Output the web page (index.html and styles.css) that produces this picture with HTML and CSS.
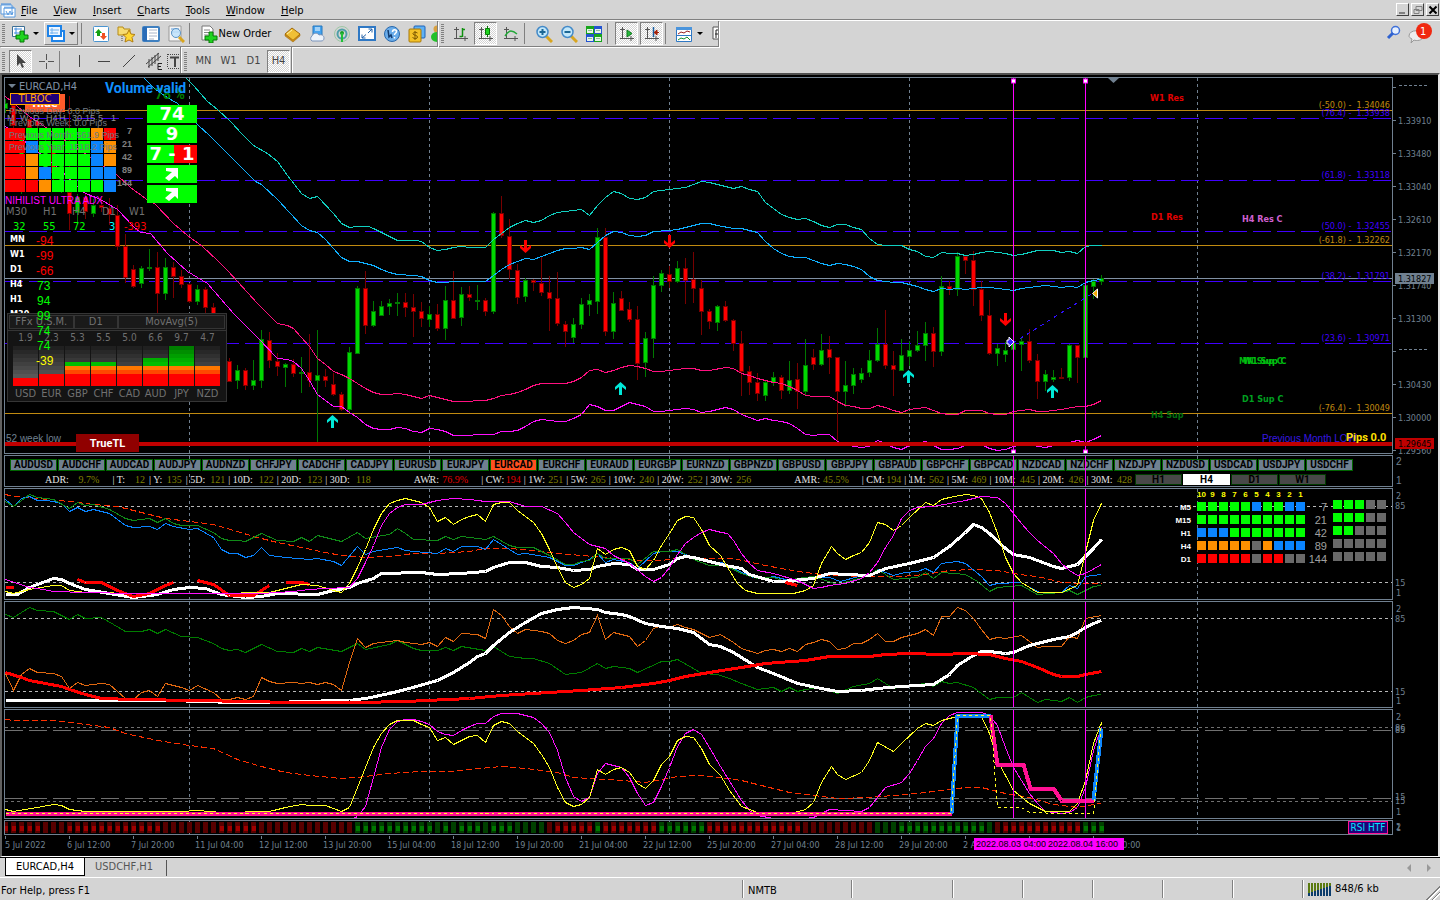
FILE: index.html
```html
<!DOCTYPE html>
<html lang="en">
<head>
    <meta charset="utf-8">
    <meta name="viewport" content="width=device-width, initial-scale=1.0">
    <title>EURCAD,H4</title>
    <link rel="stylesheet" href="styles.css">
</head>
<body>
    <header class="menubar">
        <svg class="app-icon" width="16" height="16" viewBox="0 0 16 16"><path d="M1 3h11v9H1zM4 6h11v9H4z" fill="#fff" stroke="#5a9be0"/><path d="M1.500 2h10M4.500 5.500h10" stroke="#3f8be0" stroke-width="2" stroke-dasharray="1 1"/><path d="M6 9l2 4 2-4 2 4 1-3" fill="none" stroke="#5a9be0"/></svg>
        <nav>
            <a href="#"><u>F</u>ile</a>
            <a href="#"><u>V</u>iew</a>
            <a href="#"><u>I</u>nsert</a>
            <a href="#"><u>C</u>harts</a>
            <a href="#"><u>T</u>ools</a>
            <a href="#"><u>W</u>indow</a>
            <a href="#"><u>H</u>elp</a>
        </nav>
        <div class="window-buttons">
            <button aria-label="Minimize"><svg width="10" height="10"><path d="M1 8h6" stroke="#808080" stroke-width="2"/></svg></button>
            <button aria-label="Restore"><svg width="10" height="10"><path d="M3 1.500h6v4H3zM1 4.500h5v4H1z" fill="#d4d4d4" stroke="#808080"/></svg></button>
            <button aria-label="Close"><svg width="10" height="10"><path d="M1.500 1.500l7 7M8.500 1.500l-7 7" stroke="#000" stroke-width="2"/></svg></button>
        </div>
    </header>

    <div class="toolbars">
        <div class="toolbar-row">
            <div class="toolbar standard">
                <i class="grip"></i>
                <button class="tool drop" aria-label="New chart">
                    <svg width="18" height="18"><path d="M1.500 1.500h12v10h-12z" fill="#fff" stroke="#3d6f94"/><path d="M3 4h8M5 2.500v7M3 8h6" stroke="#3f8be0"/><path d="M9 6h4v4h4v4h-4v3H9v-3H5v-4h4z" fill="#1fd41f" stroke="#087808"/></svg><i class="caret"></i>
                </button>
                <button class="tool drop raised" aria-label="Profiles">
                    <svg width="18" height="18"><path d="M5 6h12v10H5z" fill="#fff" stroke="#1e83e8" stroke-width="2"/><path d="M1 1h13v10H1z" fill="#eef6ff" stroke="#1e83e8" stroke-width="2"/><path d="M3 5h9M5 3v6M3 8h8" stroke="#6fb0ee"/></svg><i class="caret"></i>
                </button>
                <i class="sep"></i>
                <button class="tool" aria-label="Market watch"><svg width="18" height="18"><rect x="1.500" y="1.500" width="15" height="15" rx="1" fill="#fff" stroke="#4a94d0"/><path d="M6.500 4l3.500 4H8v3H5V8H3z" fill="#12a012"/><path d="M11.500 15L8 11h2V8h3v3h2z" fill="#f05020"/></svg></button>
                <button class="tool" aria-label="Navigator"><svg width="18" height="18"><path d="M1 2h5l1 2h6v6H1z" fill="#f7dc72" stroke="#b58a17"/><path d="M5 11v6" stroke="#444" stroke-dasharray="1 1"/><path d="M12 5l2 4 4 .5-3 3 1 4.500-4-2-4 2 1-4.500-3-3 4-.5z" fill="#ffd733" stroke="#b17d10"/></svg></button>
                <button class="tool" aria-label="Data window"><svg width="18" height="18"><rect x="1" y="2" width="16" height="14" rx="1" fill="#fff" stroke="#3f80c0" stroke-width="2"/><path d="M1 2h4v14H1z" fill="#2a6cb8"/><path d="M7 5h8M7 8h8M7 11h8M7 14h5" stroke="#a8b4c8"/></svg></button>
                <button class="tool" aria-label="Strategy tester"><svg width="18" height="18"><path d="M2 1h12v15H2z" fill="#f4f4f4" stroke="#999"/><path d="M4 4h8M4 7h8" stroke="#5a9be0"/><circle cx="9" cy="8" r="4.500" fill="#bfe2fa" fill-opacity=".85" stroke="#5c94c4"/><path d="M12 12l5 5" stroke="#d8a520" stroke-width="3"/></svg></button>
                <i class="sep"></i>
                <button class="tool order">
                    <svg width="18" height="18"><path d="M2 1h8l3 3v11H2z" fill="#fff" stroke="#777"/><path d="M4 5h6M4 7.500h6M4 10h4" stroke="#888"/><path d="M9 7h4v4h4v4h-4v3H9v-3H5v-4h4z" fill="#1fd41f" stroke="#087808"/></svg>New Order
                </button>
                <button class="tool" aria-label="MetaEditor"><svg width="18" height="18"><path d="M2 9l7-6 8 6-7 7z" fill="#f0bf35" stroke="#a0690b"/><path d="M2 9v2l8 6 7-6V9l-7 6z" fill="#c98b17" stroke="#a0690b" stroke-width=".5"/><path d="M4 9l5-4" stroke="#fff2a8"/></svg></button>
                <button class="tool" aria-label="Virtual hosting"><svg width="18" height="18"><path d="M5 1h9v9H5z" fill="#45a3ef" stroke="#2476bd"/><path d="M7 3h5M7 5h5" stroke="#fff"/><path d="M4 16a3 3 0 0 1 0-5c1-3 5-4 7-1 3-1 5 1 5 3s-1 3-3 3z" fill="#eef3fa" stroke="#7d96bd"/></svg></button>
                <button class="tool" aria-label="Signals"><svg width="18" height="18"><circle cx="9" cy="9" r="7.500" fill="none" stroke="#9cc6a4"/><circle cx="9" cy="9" r="4.500" fill="none" stroke="#4f9fa8" stroke-width="2"/><circle cx="9" cy="8" r="2" fill="#159c25"/><path d="M9 8v9" stroke="#20c038" stroke-width="2"/></svg></button>
                <button class="tool" aria-label="Full screen"><svg width="18" height="18"><rect x="1" y="2" width="16" height="13" fill="#fff" stroke="#2f78c4" stroke-width="2"/><path d="M10 8l4-4M10.500 4H14v3.500M8 9.500L4 13M4 9.500V13h3.500" fill="none" stroke="#2463a8"/></svg></button>
                <button class="tool" aria-label="Help"><svg width="18" height="18"><circle cx="9" cy="9" r="7.500" fill="#6badea" stroke="#2868ac"/><path d="M5 5l1 7 2-2 1 3" fill="none" stroke="#123c70" stroke-width="1.500"/><path d="M9.500 7c0-3 4-3 4-.5 0 2-2 1.500-2 3.500M11.500 12v1.500" fill="none" stroke="#fff" stroke-width="1.500"/></svg></button>
                <button class="tool" aria-label="Payments"><svg width="18" height="18"><rect x="6" y="1" width="11" height="12" rx="1" fill="#5fb0f4" stroke="#1c62b8"/><rect x="1" y="4" width="12" height="13" rx="1" fill="#f3c228" stroke="#a8790a"/><path d="M9.500 8c-2-1.500-5-.5-4.500 1s4.500 1 4.500 3-3 2-5 .5M7 6v9" fill="none" stroke="#7c5800"/></svg></button>
                <button class="tool cut" aria-label="Community"><svg width="8" height="18"><circle cx="8" cy="4" r="3.500" fill="#d8a040"/><ellipse cx="8" cy="12" rx="6" ry="5" fill="#22c02a"/></svg></button>
            </div>
            <div class="toolbar charts">
                <i class="grip"></i>
                <button class="tool" aria-label="Bar chart"><svg width="16" height="16"><path d="M3.500 1v12M1 3.500h5M1 12.500h14M12 10v5" stroke="#555"/><path d="M9.500 2v9M9 3.500h3M6.500 10.500H9" stroke="#109010" stroke-width="1.500" fill="none"/></svg></button>
                <button class="tool pressed" aria-label="Candlesticks"><svg width="16" height="16"><path d="M3.500 1v12M1 3.500h5M1 12.500h14M12 10v5" stroke="#555"/><path d="M9.500 0v11" stroke="#087808"/><path d="M7.500 2.500h4v6h-4z" fill="#1fd41f" stroke="#087808"/></svg></button>
                <button class="tool" aria-label="Line chart"><svg width="16" height="16"><path d="M3.500 1v12M1 3.500h5M1 12.500h14M12 10v5" stroke="#555"/><path d="M2 10c3-5 6-7 12-2" fill="none" stroke="#22a838" stroke-width="1.500"/></svg></button>
                <i class="sep"></i>
                <button class="tool" aria-label="Zoom in"><svg width="18" height="18"><path d="M11 11l6 6" stroke="#d8a520" stroke-width="3"/><circle cx="7.500" cy="7" r="5.500" fill="#c2e7fa" stroke="#438ac8" stroke-width="1.500"/><path d="M7.500 4v6M4.500 7h6" stroke="#1b6795" stroke-width="2"/></svg></button>
                <button class="tool" aria-label="Zoom out"><svg width="18" height="18"><path d="M11 11l6 6" stroke="#d8a520" stroke-width="3"/><circle cx="7.500" cy="7" r="5.500" fill="#c2e7fa" stroke="#438ac8" stroke-width="1.500"/><path d="M4.500 7h6" stroke="#1b6795" stroke-width="2"/></svg></button>
                <button class="tool" aria-label="Tile windows"><svg width="18" height="18"><path d="M1 1h8v8H1zM9 9h8v8H9z" fill="#18a51c"/><path d="M9 1h8v8H9zM1 9h8v8H1z" fill="#2454d0"/><path d="M2 4h6v4H2zM10 4h6v4h-6zM2 12h6v4H2zM10 12h6v4h-6z" fill="#e8f4ea"/><path d="M3 5.500h4M11 5.500h4M3 13.500h4M11 13.500h4" stroke="#8dbd9a"/></svg></button>
                <i class="sep"></i>
                <button class="tool pressed" aria-label="Auto scroll"><svg width="16" height="16"><path d="M3.500 1v12M1 3.500h5M1 12.500h14M12 10v5" stroke="#555"/><path d="M8 4l5 3.500L8 11z" fill="#26b93a" stroke="#0d7a1c"/></svg></button>
                <button class="tool pressed" aria-label="Chart shift"><svg width="16" height="16"><path d="M3.500 1v12M1 3.500h5M1 12.500h14M12 10v5" stroke="#555"/><path d="M9.500 1v10" stroke="#1a5fa0" stroke-width="1.500"/><path d="M15 6.500h-4M13 4l-3 2.500L13 9z" fill="#c02808" stroke="#a02008"/></svg></button>
                <i class="sep"></i>
                <button class="tool drop" aria-label="Templates"><svg width="18" height="18"><path d="M1.500 2.500h15v14h-15z" fill="#fff" stroke="#2f78c4"/><path d="M1 2h16v3H1z" fill="#4a94dc"/><path d="M1 10.500h16" stroke="#2f78c4"/><path d="M3 9l3-2 3 1 3-2 3 1" fill="none" stroke="#982020"/><path d="M3 15l3-2 3 1 3-2 3 3" fill="none" stroke="#109030"/></svg><i class="caret"></i></button>
                <button class="tool cut" aria-label="Indicators"><svg width="8" height="18"><path d="M8 2H3v12h5" fill="#fff" stroke="#555"/><path d="M8 5H6v8M5 9h3" stroke="#222" fill="none"/></svg></button>
            </div>
            <div class="toolbar-side">
                <button class="tool" aria-label="Search"><svg width="16" height="16"><circle cx="9.500" cy="5.500" r="4" fill="#e6f0ff" stroke="#3f70d8" stroke-width="1.500"/><path d="M7 8l-5 5" stroke="#2f62d0" stroke-width="3"/></svg></button>
                <button class="tool messages" aria-label="Messages"><svg width="26" height="24"><path d="M2 15c0-7 14-7 14 0 0 5-7 5-9 4l-3 3 1-4c-2-1-3-2-3-3z" fill="#eee" stroke="#999"/><circle cx="17" cy="10" r="8" fill="#f02810"/></svg><span>1</span></button>
            </div>
        </div>
        <div class="toolbar-row second">
            <div class="toolbar drawing">
                <i class="grip"></i>
                <button class="tool pressed" aria-label="Cursor"><svg width="16" height="16"><path d="M4 1v12l3-3 2 5 2-1-2-4h4z" fill="#444"/></svg></button>
                <button class="tool" aria-label="Crosshair"><svg width="16" height="16"><path d="M8.500 1v6M8.500 10v6M1 8.500h6M10 8.500h6" stroke="#555"/></svg></button>
                <i class="sep"></i>
                <button class="tool" aria-label="Vertical line"><svg width="16" height="16"><path d="M8.500 2v12" stroke="#444"/></svg></button>
                <button class="tool" aria-label="Horizontal line"><svg width="16" height="16"><path d="M2 8.500h12" stroke="#444"/></svg></button>
                <button class="tool" aria-label="Trendline"><svg width="16" height="16"><path d="M2 14L14 2" stroke="#444"/></svg></button>
                <button class="tool" aria-label="Equidistant channel"><svg width="18" height="18"><path d="M1 12L14 1M3 15l13-11M4 7v9M7 5v9M10 3v9M13 1v8" stroke="#444"/><path d="M17 11.500h-4v6h4M13 14.500h3" fill="none" stroke="#222"/></svg></button>
                <button class="tool text-tool" aria-label="Text label"><svg width="12" height="16"><path d="M.5 1v14M1 1.500h11M1 15.500h11" stroke="#444" stroke-dasharray="1 1"/><path d="M3 4.500h9M8 5v9" stroke="#444" stroke-width="2"/></svg></button>
            </div>
            <div class="toolbar periods">
                <i class="grip"></i>
                <button class="tool">MN</button>
                <button class="tool">W1</button>
                <button class="tool">D1</button>
                <button class="tool pressed">H4</button>
            </div>
        </div>
    </div>

    <main class="chart">
        <section class="pane price">
            <div class="plot">
                <svg class="layer" id="price"></svg>
                <svg class="layer" id="notes"></svg>
                <button class="hide-button">Hide</button>
                <button class="tlboc">TLBOC</button>
                <div class="signal-grid" id="signals"></div>
                <div class="scores">
                    <div>74</div>
                    <div>9</div>
                    <div class="split">7 - 1</div>
                    <div><svg width="16" height="14"><path d="M2 1h12v11l-3-3-6 5-4-3 7-6-6-1z" fill="#fff"/></svg></div>
                    <div><svg width="16" height="14"><path d="M2 1h12v11l-3-3-6 5-4-3 7-6-6-1z" fill="#fff"/></svg></div>
                </div>
                <div class="strength">
                    <div class="strength-head"><span>FFx U.S.M.</span><span>D1</span><span>MovAvg(5)</span></div>
                    <div class="strength-bars" id="strength"></div>
                </div>
                <svg class="layer" id="values"></svg>
                <button class="truetl">TrueTL</button>
            </div>
            <svg class="scale" id="price-scale"></svg>
        </section>
        <section class="pane symbols">
            <div class="plot">
                <svg class="layer" id="symbol-grid"></svg>
                <div class="symbol-row" id="symbol-row"></div>
                <div class="range-row">
                    <div class="ranges" id="ranges"></div>
                    <div class="tf-buttons"><button>H1</button><button class="active">H4</button><button>D1</button><button>W1</button></div>
                </div>
                <svg class="layer" id="symbol-cursor"></svg>
            </div>
            <svg class="scale" id="symbol-scale"></svg>
        </section>
        <section class="pane osc">
            <div class="plot">
                <svg class="layer" id="osc"></svg>
                <div class="matrix" id="matrix"></div>
            </div>
            <svg class="scale" id="osc-scale"></svg>
        </section>
        <section class="pane trend">
            <div class="plot"><svg class="layer" id="trend"></svg></div>
            <svg class="scale" id="trend-scale"></svg>
        </section>
        <section class="pane rsi">
            <div class="plot"><svg class="layer" id="rsi"></svg></div>
            <svg class="scale" id="rsi-scale"></svg>
        </section>
        <section class="pane strip">
            <div class="plot"><svg class="layer" id="strip"></svg><button class="rsi-button">RSI HTF</button></div>
            <svg class="scale" id="strip-scale"></svg>
        </section>
        <svg class="dates" id="dates"></svg>
    </main>

    <nav class="tabs">
        <a class="active" href="#">EURCAD,H4</a>
        <a href="#">USDCHF,H1</a>
        <div class="tab-arrows"><i class="left"></i><i class="right"></i></div>
    </nav>

    <footer class="status">
        <span class="help">For Help, press F1</span>
        <span class="profile">NMTB</span>
        <span class="wide"></span>
        <span></span>
        <span></span>
        <span></span>
        <span></span>
        <span></span>
        <span class="traffic"><svg width="23" height="13" id="traffic"></svg>848/6 kb</span>
    </footer>

    <script src="script.js"></script>
</body>
</html>
```
FILE: styles.css
```css
:root {
    --face: #d4d4d4;
    --slate: #708090;
    --lime: #00ff00;
    --blue: #0a84ff;
    --ui: "DejaVu Sans Condensed", "DejaVu Sans", sans-serif;
    --chart: "Liberation Sans", sans-serif;
}

* {
    box-sizing: border-box;
}

body {
    margin: 0;
    min-height: 100vh;
    display: flex;
    flex-direction: column;
    background: var(--face);
    color: #000;
    font: 11px/14px var(--ui);
}

a {
    color: inherit;
    text-decoration: none;
}

button {
    font: inherit;
    color: inherit;
    margin: 0;
    padding: 0;
    border: 0;
    background: none;
}

svg {
    display: block;
    flex: none;
}

/* menu */
.menubar {
    display: flex;
    align-items: center;
    height: 20px;
    border-bottom: 1px solid #808080;
}

.menubar nav {
    display: flex;
    flex: 1;
    gap: 16px;
    padding: 3px 0 0 5px;
}

.window-buttons {
    display: flex;
    gap: 2px;
    padding-right: 1px;
}

.window-buttons button {
    width: 13px;
    height: 13px;
    padding: 1px;
    border: 1px solid;
    border-color: #fff #404040 #404040 #fff;
}

/* toolbars */
.toolbars {
    border-top: 1px solid #fff;
}

.toolbar-row {
    display: flex;
    height: 26px;
}

.toolbar {
    display: flex;
    align-items: center;
    padding-left: 2px;
    border-right: 1px solid #808080;
    border-bottom: 1px solid #808080;
    box-shadow: 1px 1px #fff;
    margin-right: 1px;
    overflow: hidden;
}

.second .toolbar {
    padding-top: 2px;
    border-bottom: 0;
}

.grip {
    width: 3px;
    height: 19px;
    margin-right: 3px;
    background: repeating-linear-gradient(#808080 0 1px, var(--face) 1px 2px);
}

.charts .grip,
.periods .grip {
    margin-right: 4px;
}

.sep {
    width: 1px;
    height: 21px;
    margin: 0 6px 0 1px;
    background: #808080;
}

.tool {
    display: flex;
    flex: none;
    align-items: center;
    justify-content: center;
    width: 25px;
    height: 23px;
}

.tool.drop {
    width: 34px;
    gap: 4px;
}

.standard .drop {
    margin-right: 2px;
}

.charts .drop {
    margin-right: 4px;
}

.caret {
    border: 3px solid transparent;
    border-top-color: #000;
    border-bottom: 0;
}

.tool.raised {
    border: 1px solid;
    border-color: #fff #808080 #808080 #fff;
}

.tool.pressed {
    width: 23px;
    margin: 0 1px;
    border: 1px solid;
    border-color: #808080 #fff #fff #808080;
    background: repeating-conic-gradient(#fff 0 25%, var(--face) 0 50%) 0 0 / 2px 2px;
}

.tool.order {
    width: 83px;
    gap: 1px;
    padding-right: 4px;
}

.tool.cut {
    width: 8px;
}

.toolbar-side {
    display: flex;
    gap: 1px;
    margin-left: auto;
    padding-right: 8px;
}

.messages {
    position: relative;
}

.messages span {
    position: absolute;
    top: 4px;
    left: 13px;
    color: #fff;
}

.tool.text-tool {
    width: 14px;
}

.periods {
    color: #444;
}

/* chart window */
.chart {
    display: flex;
    flex: 1;
    flex-direction: column;
    gap: 1px;
    padding: 2px 0 0 2px;
    background: #000;
    border: solid;
    border-width: 2px 2px 1px;
    border-color: #505050 #e4e4e4 #fff #606060;
    font-family: var(--chart);
    font-size: 10px;
}

.pane {
    display: flex;
}

.plot {
    position: relative;
    flex: 1;
    min-width: 0;
    border: 1px solid var(--slate);
    overflow: hidden;
}

.layer {
    position: absolute;
    inset: 0;
    width: 100%;
    height: 100%;
    pointer-events: none;
}

.scale {
    width: 45px;
    height: 100%;
}

.price {
    height: 377px;
}

.symbols {
    height: 32px;
}

.osc {
    height: 112px;
}

.trend {
    height: 107px;
}

.rsi {
    height: 110px;
}

.strip {
    height: 15px;
}

.dates {
    width: 100%;
    height: 19px;
}

.crisp {
    fill: none;
    shape-rendering: crispEdges;
}

text {
    fill: var(--slate);
    font: 10px var(--chart);
}

text.axis,
text.fib {
    font: 9px var(--ui);
}

text.small {
    font-size: 9px;
}

text.bold {
    font-size: 9px;
    font-weight: bold;
}

text.level {
    font: bold 9px "DejaVu Sans Condensed", sans-serif;
}

text.title {
    font: 11px var(--ui);
}

text.num {
    font-size: 12px;
}

text.head {
    font: bold 14px Roboto, sans-serif;
}

text.pips {
    font: bold 11px Roboto, sans-serif;
}

/* objects lying over the price plot */
.hide-button {
    position: absolute;
    top: 16px;
    left: 20px;
    width: 40px;
    height: 18px;
    background: #ff5a2a;
    color: #fff;
    font: bold 11px/20px var(--ui);
}

.tlboc {
    position: absolute;
    top: 15px;
    left: 5px;
    width: 50px;
    height: 12px;
    border: 1px solid #ffa500;
    background: #200078;
    color: #ffa500;
    font: 11px/10px var(--ui);
}

.signal-grid {
    position: absolute;
    top: 50px;
    left: 0;
    display: grid;
    grid-template-columns: 20px repeat(7, 12px);
    grid-auto-rows: 12px;
    gap: 1px;
}

.scores {
    position: absolute;
    top: 27px;
    left: 142px;
    width: 50px;
    display: grid;
    gap: 2px;
    color: #fff;
    font: bold 18px/18px "DejaVu Sans", sans-serif;
    text-align: center;
}

.scores div {
    display: flex;
    align-items: center;
    justify-content: center;
    height: 18px;
    background: var(--lime);
}

.scores .split {
    background: linear-gradient(90deg, var(--lime) 54%, #ff0000 54%);
}

.strength {
    position: absolute;
    top: 235px;
    left: 2px;
    width: 220px;
    height: 89px;
    border: 1px solid #353535;
    background: #141414;
    color: #707070;
    font: 10px/12px var(--ui);
}

.strength-head {
    display: flex;
    padding: 1px;
    border-bottom: 1px solid #353535;
    font-size: 11px;
    text-align: center;
}

.strength-head span {
    flex: 44;
    border: 1px solid #353535;
    background: #1a1a1a;
}

.strength-head span:first-child {
    flex: 65;
}

.strength-head span:last-child {
    flex: 109;
}

.strength-bars {
    display: grid;
    grid-template-columns: repeat(8, 25px);
    gap: 1px;
    padding: 1px 5px;
    text-align: center;
}

.strength-bars .bar {
    display: flex;
    flex-direction: column-reverse;
    height: 40px;
    margin: 2px 0;
    background: linear-gradient(#202020 0 10%, #282828 10% 20%, #303030 20% 30%, #383838 30% 40%, #404040 40% 50%, #484848 50% 60%, #505050 60% 70%, #585858 70% 80%, #606060 80%);
}

.strength-bars span {
    font-size: 11px;
}

.bar i {
    height: 4px;
}

.truetl {
    position: absolute;
    top: 356px;
    left: 71px;
    width: 63px;
    height: 18px;
    background: #900000;
    color: #fff;
    font: bold 11px/20px Roboto, sans-serif;
}

/* symbol buttons and ranges */
.symbol-row {
    position: relative;
    display: flex;
    gap: 1px;
    padding: 3px 0 0 5px;
}

.symbol-row button {
    width: 47px;
    height: 12px;
    border: 1px solid #006400;
    background: var(--slate);
    color: #000;
    font: bold 10px/10px Roboto, sans-serif;
}

.symbol-row .active {
    background: #ff5020;
}

.range-row {
    position: relative;
    display: flex;
    padding-top: 3px;
}

.ranges {
    display: flex;
    width: 1130px;
    padding-left: 40px;
    color: #e0e0e0;
    font: 10px/12px "Liberation Serif", serif;
}

.ranges span {
    display: flex;
    width: 43px;
    justify-content: space-between;
    padding-right: 3px;
    white-space: nowrap;
}

.ranges .name {
    width: 68px;
    padding-right: 13px;
}

.ranges .short {
    width: 37px;
    padding-right: 4px;
}

.ranges .long {
    width: 49px;
    padding-right: 3px;
}

.ranges .end {
    width: 89px;
    padding-right: 43px;
}

.ranges b {
    color: #808000;
    font-weight: normal;
}

.ranges .hot b {
    color: #e00000;
}

.tf-buttons {
    display: flex;
    gap: 1px;
}

.tf-buttons button {
    width: 47px;
    height: 11px;
    border: 1px solid #003c00;
    background: #484848;
    color: #000;
    font: bold 10px/9px Roboto, sans-serif;
}

.tf-buttons .active {
    background: #fff;
    border-color: #fff;
}

/* timeframe matrix */
.matrix {
    position: absolute;
    top: 0;
    right: 6px;
    display: grid;
    grid-template-columns: 26px repeat(10, 9px) 24px repeat(5, 9px);
    grid-template-rows: 11px repeat(5, 11px);
    gap: 2px;
    color: #ffff00;
    font: bold 8px/11px "Liberation Sans", sans-serif;
    text-align: center;
}

.matrix i {
    height: 9px;
}

.matrix .late {
    margin-top: -2px;
}

.matrix .label {
    color: #fff;
    text-align: right;
    padding-right: 4px;
}

.matrix .period {
    color: #a0a0a0;
    font-size: 11px;
    font-weight: normal;
    text-align: right;
    padding-right: 4px;
}

.g { background: var(--lime); }
.r { background: #ff0000; }
.o { background: #ff9000; }
.b { background: var(--blue); }
.x { background: #696969; }

.rsi-button {
    position: absolute;
    right: 4px;
    top: 0;
    width: 40px;
    height: 13px;
    border: 1px solid #ff1493;
    background: #200078;
    color: #00e5ff;
    font: 10px/11px var(--ui);
}

/* chart tabs */
.tabs {
    display: flex;
    height: 21px;
    padding-left: 5px;
    border-top: 1px solid #000;
    border-bottom: 1px solid #fff;
    color: #555;
}

.tabs a {
    padding: 2px 10px 0;
    height: 18px;
}

.tabs a + a {
    height: 16px;
    margin-top: 2px;
    padding-top: 0;
    padding-right: 13px;
    border-right: 1px solid #555;
}

.tabs .active {
    border: 1px solid #000;
    border-top: 0;
    background: #fff;
    color: #000;
}

.tab-arrows {
    display: flex;
    gap: 16px;
    align-items: center;
    margin-left: auto;
    padding-right: 9px;
}

.tab-arrows i {
    border: 4px solid transparent;
}

.tab-arrows .left {
    border-left: 0;
    border-right-color: #999;
}

.tab-arrows .right {
    border-right: 0;
    border-left-color: #999;
}

/* status bar */
.status {
    display: flex;
    height: 22px;
    padding: 2px 0;
    line-height: 22px;
    background:
        linear-gradient(135deg, transparent 50%, #808080 50% 56%, #fff 56% 62%, transparent 62% 68%, #808080 68% 74%, #fff 74% 80%, transparent 80%) right bottom / 14px 14px no-repeat;
}

.status span {
    width: 70px;
    height: 18px;
    padding-left: 5px;
    border-left: 1px solid #808080;
    box-shadow: inset 1px 0 #fff;
}

.status .help {
    flex: 1;
    padding-left: 1px;
    border: 0;
    box-shadow: none;
}

.status .profile {
    width: 109px;
}

.status .wide {
    width: 101px;
}

.status .traffic {
    display: flex;
    align-items: center;
    gap: 4px;
    width: 138px;
}
```
FILE: script.js
```js
const NS = 'http://www.w3.org/2000/svg';
const STEP = 8;
const SEPARATORS = [23, 53, 83, 113, 149];
const CURSORS = [126, 135];

const byId = (id) => document.getElementById(id);

const add = (parent, name, attrs, text) => {
    const el = document.createElementNS(NS, name);
    for (const key in attrs) el.setAttribute(key, attrs[key]);
    if (text !== undefined) el.textContent = text;
    byId(parent).appendChild(el);
    return el;
};

const barX = (k) => Math.round(k * STEP) + 0.5;

// samples are kept at three units to the pixel, base is the top of the pane
const toY = (v, base) => Math.round((v - base) / 3) + 0.5;

const series = (id, base, color, width, data, dash) => {
    const points = data.trim().split(/[\s;]+/);
    let out = '';
    for (let i = 0; i < points.length; i += 2) {
        out += barX(+points[i]) + ',' + toY(+points[i + 1], base) + ' ';
    }
    add(id, 'polyline', { class: 'crisp', points: out, stroke: color, 'stroke-width': width, 'stroke-dasharray': dash || 'none' });
};

const hline = (id, y, color, dash, width) => add(id, 'line', {
    class: 'crisp', x1: 0, x2: '100%', y1: y, y2: y, stroke: color, 'stroke-width': width || 1, 'stroke-dasharray': dash || 'none'
});

const vline = (id, x, color, dash) => add(id, 'line', {
    class: 'crisp', x1: x, x2: x, y1: 0, y2: '100%', stroke: color, 'stroke-dasharray': dash || 'none'
});

const label = (id, x, y, text, color, cls) => {
    const attrs = { x: x < 0 ? '100%' : x, y: y, style: 'fill:' + color, class: cls || '' };
    if (x < 0) attrs.dx = x;
    return add(id, 'text', attrs, text);
};

const separators = (id) => SEPARATORS.forEach((k) => vline(id, barX(k), '#708090', '3 3'));
const cursors = (id) => CURSORS.forEach((k) => vline(id, barX(k), '#ff00ff'));

// ---- price pane ----
// direction, high, body top, body bottom, low
const bars = `
G 70 80 98 110;R 80 86 150 200;G 160 170 260 355;R 125 128 155 170;R 130 135 150 200;G 170 200 300 330;R 180 210 290 340;G 240 260 330 350;
R 60 347 413 462;G 355 363 410 445;R 350 363 408 430;G 370 387 413 423;R 360 387 395 408;R 366 395 416 447;R 387 417 513 521;R 474 511 606 620;
R 567 580 633 636;G 570 576 624 636;G 519 573 579 585;R 528 573 654 717;G 546 573 654 672;R 558 573 603 666;R 582 600 627 636;R 620 624 678 682;
G 627 640 678 687;R 632 639 697 712;R 682 693 790 830;R 740 780 856 880;R 846 855 917 918;G 867 882 915 939;R 876 882 929 942;G 852 912 929 942;
G 762 789 915 936;R 768 792 854 876;R 832 854 873 900;G 860 864 876 932;R 849 864 893 903;G 843 888 893 950;R 774 888 915 933;G 762 897 915 1098;
R 879 900 914 933;R 891 924 957 960;R 948 954 1001 1005;G 813 828 1001 1008;G 630 636 834 834;R 585 636 749 774;G 675 705 750 753;G 675 690 720 720;
G 669 681 693 717;G 651 678 683 720;R 651 678 696 723;R 654 693 708 783;R 678 705 729 753;G 690 714 732 753;R 684 714 759 765;G 630 672 759 792;
R 585 672 729 729;G 633 654 726 750;R 630 654 666 675;G 627 672 678 702;R 666 672 708 720;G 408 411 708 714;R 360 411 480 486;R 429 480 582 609;
R 564 582 666 684;G 606 612 663 678;R 609 612 621 645;R 543 621 651 660;R 600 648 669 765;R 588 666 744 750;R 735 744 768 813;G 726 744 786 801;
G 666 684 747 759;G 654 672 687 720;G 456 483 678 714;R 456 483 768 780;G 648 681 768 789;R 645 666 705 705;R 678 699 732 738;R 690 729 864 912;
G 768 786 861 903;G 600 627 789 846;G 582 591 630 648;R 570 594 617 636;G 555 576 617 621;R 546 576 615 684;R 528 609 639 681;R 612 636 708 777;
R 699 705 738 759;G 687 690 741 765;R 675 690 735 738;R 729 732 803 825;R 765 801 887 960;R 870 885 921 957;R 891 918 954 975;G 912 918 960 975;
G 888 903 920 930;R 897 903 944 969;G 855 912 944 954;R 861 909 947 999;G 789 867 947 957;R 819 843 867 882;G 774 822 867 870;R 780 819 846 894;
R 843 843 947 1095;G 855 927 948 993;G 876 894 930 954;G 876 891 912 921;G 822 852 891 903;G 756 804 855 858;R 702 804 870 879;R 825 867 881 960;
G 789 837 885 885;G 795 822 843 870;G 765 807 825 828;G 738 771 810 855;R 753 771 828 873;G 600 630 828 840;R 615 630 641 657;G 528 540 641 660;
R 537 540 555 594;R 525 552 641 690;R 615 639 720 735;R 672 717 834 837;G 804 816 834 870;G 798 822 837 858;G 798 801 822 822;G 783 795 807 885;
R 759 795 855 861;R 834 852 918 969;G 882 894 918 945;G 882 903 912 918;R 876 903 906 909;G 804 807 906 915;R 807 807 846 921;G 615 627 846 846;
G 609 615 633 669;G 597 606 617 627`;

separators('price');
[127, 313, 466, 616, 802].forEach((v) => hline('price', toY(v, 7), '#4000ff', '18 6'));
[103, 508, 1012].forEach((v) => hline('price', toY(v, 7), '#c08a10'));
hline('price', toY(607, 7), '#8090a4');

bars.trim().split(/;\s*/).forEach((row, k) => {
    const [dir, ...v] = row.trim().split(' ');
    const [high, top, bottom, low] = v.map((n) => Math.round((+n - 6) / 3));
    const dark = dir === 'G' ? '#007800' : '#780000';
    add('price', 'path', { class: 'crisp', d: `M${barX(k)} ${high}V${low}`, stroke: dark });
    add('price', 'rect', { x: k * STEP - 2, y: top, width: 5, height: Math.max(2, bottom - top), fill: dark });
    if (bottom - top > 2) {
        add('price', 'rect', { x: k * STEP - 1, y: top + 1, width: 3, height: bottom - top - 2, fill: dir === 'G' ? '#00d800' : '#ff0000' });
    }
});

series('price', 6, '#10d0c0', 1, `22.6 5;23.5 28;25.2 75;26.5 98;28.1 135;29.6 175;31 207;32.7 230;34 255;35.2 297;37 350;38 365;39 360;41 410;42 440;43 454;44 450;45.4 450;46 456;49 493;51.4 493;52 496;53 514;54 523;55 520;56 514;57 511;58 514;60 514;61 488;62 472;63 452;64 442;65 433;66 439;67 432;68 418;69 409;70 404;71 403;72 400;73 418;74 388;75 362;76 346;77 352;78 367;79 368;80 363;81 346;83 340;85 334;87 316;88 319;91 337;92 331;93 340;94 344;95 379;96 397;97 415;98 424;99 430;100 427;101 436;102 448;103 454;104 445;105 445;106 454;107 460;108 487;109 505;110 508;112 508;113 520;114 526;115 541;116 542;117 529;118 532;119 532;120 536;121 535;122 528;123 525;124 529;125 532;126 538;127 535;129 523;131 523;132 529;133 526;134 532;135 511;136 508;137 508`);
series('price', 6, '#10b0ff', 1, `17.4 5;18.6 35;20 60;21.5 82;24 145;25.6 180;28.5 250;31.2 315;32 323;34 370;37 447;38 462;39 468;40 490;41 517;42 543;43 556;44 556;45 560;46 568;47 580;48 589;49 595;51 597;52 601;53 612;54 619;55 619;56 616;60 616;61 597;62 580;63 565;64 556;65 547;66 550;67 541;68 532;69 523;70 517;71 517;72 514;73 520;74 499;75 478;76 466;77 469;78 478;79 481;80 477;81 466;83 463;84 458;85 454;86 448;87 442;88 442;89 448;91 457;92 457;93 463;94 469;95 496;96 515;97 530;98 539;99 544;100 544;101 553;102 562;103 568;104 562;105 565;106 571;107 580;108 600;109 613;110 616;111 617;112 619;113 625;114 631;115 639;116 646;117 637;118 640;119 636;120 640;121 637;122 633;123 634;124 636;125 638;126 643;127 637;129 631;130 628;131 630;132 634;133 631;134 634;135 618;136 613;137 609`);
series('price', 6, '#ff1080', 1, `0 60;3 120;14 298;15.6 333;17.5 367;18.8 385;21 440;22.7 478;24.6 510;26.5 553;27.7 582;31.5 682;34 742;35.2 747;36 757;37 782;38 810;39 847;40 865;41 885;42 893;43 907;44 920;45 937;46 949;47 955;48 955;49 952;50 954;51 961;52 967;53 958;54 962;55 968;56 976;58 976;59 973;60 973;61 967;62 958;63 955;64 949;65 940;66 928;67 922;70 922;71 915;72 904;73 883;74 880;75 889;76 882;77 872;78 868;79 871;80 877;81 886;82 886;84 880;85 877;86 877;87 883;88 881;90 874;91 877;92 890;93 897;94 907;95 911;96 918;97 922;98 930;99 942;100 958;101 961;103 961;104 975;105 986;106 991;107 997;108 997;109 988;110 993;111 1001;112 1009;113 1000;115 994;116 1003;117 1012;118 1015;119 1014;120 1003;122 1003;123 1012;124 1015;125 1015;126 1006;128 1000;129 1006;130 1006;132 1000;134 991;135 991;136 983;137 972`);
series('price', 6, '#ff10ff', 1, `0 150;6.3 268;9.8 348;11.9 370;14 400;16 450;16.9 468;18.1 472;20.2 530;22.7 585;25.2 620;28.5 710;31.5 782;34 846;35.2 848;36 856;37 877;38 913;39 955;40 973;41 991;42 991;43 1009;44 1024;45 1045;46 1057;47 1060;48 1060;49 1054;50 1056;51 1065;52 1069;53 1057;54 1060;55 1066;56 1078;58 1078;59 1075;61 1075;62 1066;63 1066;64 1062;65 1050;66 1036;67 1030;68 1033;69 1036;70 1034;71 1027;72 1015;73 985;74 989;75 1003;76 1002;77 990;78 979;79 984;80 990;81 1006;82 1006;84 1000;85 997;86 1000;87 1009;88 1006;90 994;91 998;92 1014;93 1024;94 1033;95 1027;96 1033;97 1035;98 1041;99 1057;100 1075;101 1078;102 1075;103 1075;104 1096;106 1111;107 1114;108 1111;109 1093;110 1100;111 1113;112 1119;113 1106;115 1096;116 1108;117 1118;118 1120;119 1117;120 1108;122 1105;123 1117;124 1123;125 1119;126 1110;128 1100;129 1111;130 1114;131 1108;133 1098;134 1093;135 1099;136 1088;137 1077`);

add('price', 'path', { class: 'crisp', d: 'M1008 265L1088 215', stroke: '#3010ff', 'stroke-dasharray': '4 4' });
cursors('price');
hline('price', 366, '#c00000', '', 4);

CURSORS.forEach((k) => [1, 372].forEach((y) => add('price', 'rect', { x: k * STEP - 1.5, y: y, width: 4, height: 4, fill: '#fff', stroke: '#ff00ff' })));

const UP = 'l-5.500 5v3l4-3v8h3v-8l4 3v-3z';
const DOWN = 'l-5.500-5v-3l4 3v-8h3v8l4-3v3z';
[[327, 337], [615, 304], [903, 292], [1047, 307]].forEach(([x, y]) => add('price', 'path', { d: `M${x + 0.5} ${y}${UP}`, fill: '#00e8d8' }));
[[520, 175], [664, 170], [1000, 248]].forEach(([x, y]) => add('price', 'path', { d: `M${x + 0.5} ${y}${DOWN}`, fill: '#ff0000' }));
add('price', 'path', { d: 'M1002 262h2v-3l5 5-5 5v-3h-2z', fill: '#3020ff', stroke: '#fff' });
add('price', 'path', { d: 'M1092.500 211v9l-5-4.500z', fill: '#f0a800', stroke: '#fff' });
add('price', 'path', { d: 'M1103 0h11l-5.500 5z', fill: '#708090' });
add('price', 'path', { d: 'M3 6h8l-4 4z', fill: '#708090' });

label('notes', 14, 12, 'EURCAD,H4', '#8090a4', 'title');
label('notes', 150, 21, '78 %', '#008000', 'head');
label('notes', 100, 15, 'Volume valid', '#1090ff', 'head');
label('notes', 1, 364, '52 week low', '#708090');
label('notes', 5, 239, 'M30', '#fff', 'level');
[[-242, 23, 'W1 Res', '#e00000'], [-241, 142, 'D1 Res', '#e00000'], [-150, 144, 'H4 Res C', '#d060d0'],
    [-153, 286, 'MN Sup C', '#00b010'], [-149, 286, 'W1 Sup C', '#00c010'], [-150, 324, 'D1 Sup C', '#00a020'],
    [-241, 340, 'H4 Sup', '#007010']].forEach(([x, y, t, c]) => label('notes', x, y, t, c, 'level'));

[[30, '(-50.0) -  1.34046', '#c08a10'], [38, '(76.4) -  1.33938', '#4000ff'], [100, '(61.8) -  1.33118', '#4000ff'],
    [151, '(50.0) -  1.32455', '#4000ff'], [165, '(-61.8) -  1.32262', '#c08a10'], [201, '(38.2) -  1.31791', '#4000ff'],
    [263, '(23.6) -  1.30971', '#4000ff'], [333, '(-76.4) -  1.30049', '#c08a10']].forEach(([y, t, c]) => {
    const el = label('notes', -2, y, t.replace(/ {2}/, '\u00a0\u00a0'), c, 'fib');
    el.setAttribute('text-anchor', 'end');
});
label('notes', -130, 364, 'Previous Month LOW', '#3818e0');
label('notes', -46, 363, 'Pips 0.0', '#ffe000', 'pips');

['rgggggor', 'rbggggbo', 'roggggbo', 'robgggbb', 'rroggggb'].join('').split('').forEach((c) => {
    const el = document.createElement('i');
    el.className = c;
    byId('signals').appendChild(el);
});

label('values', 4, 36, 'Previous Day: 0.0 Pips', '#707880', 'small');
label('values', 4, 48, 'Previous Week: 0.0 Pips', '#707880', 'small');
label('values', 4, 60, 'Previous Month: 561.9 Pips', '#707880', 'small');
label('values', 4, 72, 'Previous Year: 1518.2 Pips', '#707880', 'small');
['M', 'W', 'D', 'H4', 'H', '30', '15', '5', '1'].forEach((t, i) => label('values', 2 + i * 13, 43, t, '#909090', 'small'));
['7', '21', '42', '89', '144'].forEach((t, i) => {
    label('values', 127, 56 + i * 13, t, '#808080', 'bold').setAttribute('text-anchor', 'end');
});
label('values', 0, 126, 'NIHILIST ULTRA ADX', '#ff00ff');
[[1, 'M30'], [38, 'H1'], [67, 'H4'], [97, 'D1'], [124, 'W1']].forEach(([x, t]) => label('values', x, 137, t, '#707070', 'title'));
[[8, '32', '#00ff00'], [38, '55', '#00ff00'], [68, '72', '#00ff00'], [104, '3', '#00ffff'], [119, '-393', '#ff0000']]
    .forEach(([x, t, c]) => label('values', x, 152, t, c, 'title'));
['MN', 'W1', 'D1', 'H4', 'H1'].forEach((t, i) => label('values', 5, 164 + i * 15, t, '#fff', 'level'));
['-94', '-99', '-66', '73', '94', '99', '74', '74', '-39'].forEach((t, i) => {
    const color = i === 8 ? '#ffff00' : i < 3 ? '#ff0000' : '#00ff00';
    label('values', t.length > 2 ? 31 : 32, 167 + i * 15, t, color, 'num');
});

const reds = ['#ff0000', '#ff0000', '#ff0000', '#ff4800', '#ff7800'];
[['USD', '1.9', 2], ['EUR', '2.3', 3], ['GBP', '5.3', 6], ['CHF', '5.5', 6], ['CAD', '5.0', 5], ['AUD', '6.6', 7], ['JPY', '9.7', 10], ['NZD', '4.7', 5]].forEach(([name, value, n]) => {
    let bar = '';
    for (let i = 0; i < n; i++) bar += `<i style="background:${reds[i] || 'rgb(0,' + (190 - (i - 5) * 16) + ',0)'}"></i>`;
    byId('strength').innerHTML += `<div>${value}<div class="bar">${bar}</div><span>${name}</span></div>`;
});

// ---- price scale ----
const tick = (id, y) => add(id, 'path', { class: 'crisp', d: `M0 ${y}h3`, stroke: '#708090' });
['1.33910', '1.33480', '1.33040', '1.32610', '1.32170', '1.31740', '1.31300', '', '1.30430', '1.30000', '1.29560'].forEach((t, i) => {
    const y = 43.5 + i * 33;
    tick('price-scale', y);
    label('price-scale', 5, y + 3, t, '#708090', 'axis');
});
tick('price-scale', 10.5);
add('price-scale', 'path', { class: 'crisp', d: 'M6 8.500h30M6 272.500h30', stroke: '#708090', 'stroke-dasharray': '3 2' });
[[196, '1.31827', '#708090'], [361, '1.29645', '#c00000']].forEach(([y, t, c]) => {
    add('price-scale', 'rect', { x: 2, y: y, width: 39, height: 11, fill: c });
    label('price-scale', 5, y + 9, t, '#000', 'axis');
});

// ---- symbol pane ----
separators('symbol-grid');
cursors('symbol-cursor');
'AUDUSD AUDCHF AUDCAD AUDJPY AUDNZD CHFJPY CADCHF CADJPY EURUSD EURJPY EURCAD EURCHF EURAUD EURGBP EURNZD GBPNZD GBPUSD GBPJPY GBPAUD GBPCHF GBPCAD NZDCAD NZDCHF NZDJPY NZDUSD USDCAD USDJPY USDCHF'.split(' ').forEach((s) => {
    byId('symbol-row').innerHTML += `<button${s === 'EURCAD' ? ' class="active"' : ''}>${s}</button>`;
});
[['ADR:', '9.7%', 'name'], ['| T:', '12', 'short'], ['| Y:', '135', 'short'], ['| 5D:', '121', ''], ['| 10D:', '122', 'long'], ['| 20D:', '123', 'long'], ['| 30D:', '118', 'end'],
    ['AWR:', '76.9%', 'name hot'], ['| CW:', '194', 'hot'], ['| 1W:', '251', ''], ['| 5W:', '265', ''], ['| 10W:', '240', 'long'], ['| 20W:', '252', 'long'], ['| 30W:', '256', 'end'],
    ['AMR:', '45.5%', 'name'], ['| CM:', '194', ''], ['| 1M:', '562', ''], ['| 5M:', '469', ''], ['| 10M:', '445', 'long'], ['| 20M:', '426', 'long'], ['| 30M:', '428', 'long']].forEach(([n, v, c]) => {
    byId('ranges').innerHTML += `<span class="${c}">${n} <b>${v}</b></span>`;
});
label('symbol-scale', 3, 10, '2', '#708090');
label('symbol-scale', 3, 29, '1', '#708090');

// ---- first oscillator ----
separators('osc');
[17.5, 93.5].forEach((y) => hline('osc', y, '#b8b8b8', '3 3'));
series('osc', 117, '#ff3000', 1, `0 133;1 138;4 143;8 152;11 161;14 169;18 191;20 203;24 215;26 223;29 244;31 257;34 277;37 292;40 305;42 314;45 320;48 317;51 310;54 309;58 302;60 295;63 294;66 299;69 308;72 316;75 320;79 330;82 329;85 322;88 323;91 325;95 345;99 362;103 375;108 378;112 377;115 373;118 360;121 356;124 360;126 370;129.6 380;132 397;135 400;137 398`, '6 3');
series('osc', 117, '#0a84ff', 1, `0 148;1 168;2 143;3 137;4 151;5 151;6 153;7 160;8 184;9 171;10 182;11 178;12 182;13 190;15 226;16 231;18 229;19 238;20 220;21 229;23 237;24 234;26 261;27 296;28 308;29 308;30 321;31 316;32 292;33 315;35 320;38 328;39 325;41 333;42 346;44 289;45 311;46 302;49 292;50 300;51 303;54 308;55 294;56 302;57 287;59 289;60 297;61 266;62 283;63 296;64 311;65 308;68 321;69 334;70 346;71 344;73 328;74 308;75 337;76 328;78 335;79 354;81 310;82 303;84 303;86 320;88 333;89.5 335;91.5 360;93.5 380;95 383;96 379;97.5 388;99 388;101 380;103 380;104.4 394;106.6 378;108 376;109 357;111 374;112.4 366;114 364;115 355;116 366;117 338;119 334;120 339;122 377;123 405;124 400;127 397;128 410;129.3 427;132 425;133 405;134 415;135 377;137 373`);
series('osc', 117, '#108a18', 1, `0 153;1 167;3 133;4 142;6 146;8 173;9 155;10 165;11 163;13 178;15 205;16 210;18 205;19 217;20 203;21 219;22 226;24 224;26 245;27 263;28 271;29 270;30 274;32 250;34 271;36 273;37 261;38 273;39 256;42 273;44 246;45 264;48 252;49 235;50 248;51 266;54 271;55 259;56 268;57 257;60 268;61 257;63 284;64 292;66 290;68 315;70 342;71 341;72 333;73 330;74 309;75 323;78 323;79 341;81 304;83 303;84 298;86 328;88 345;90 345;92 370;94 385;96 380;97.5 392;99 385;101 378;104 403;108 376;109 358;111 388;114 380;115 366;116 383;117 366;120 372;121.5 392;123 424;124 411;127 404;129 433;132 426;133 419;134 432;136 409;137 406`);
series('osc', 117, '#fff', 3, `0 432;1.5 432;3 410;6 385;7 387;8 400;10 417;13 428;16 440;19 433;21 418;23 412;25 415;27 432;30 440;32 437;34 430;39 432;41 420;43 412;44 400;46 385;47 370;52 366;54 371;57 368;60 363;61 350;63 337;65 335;67 347;69 350;71 360;73 358;74 347;76 340;78 342;79 357;81 356;83 343;84 325;85 317;86 320;88 333;90 345;92 355;93 372;96 392;97 394;101 385;103 370;105 372;108 375;110 355;113 338;116 320;118 288;120 245;121 222;122 230;123 250;125 295;126 313;128 322;131 347;132 354;134 343;135 317;136 293;137 268`);
['0 410;1 410', '9 387;10 397;12 397;14 420;16 438;18 430;20 405;21 396', '24 390;26 403;28 435;31 435;33 405', '35 395;37 395;38 403', '97.5 397;99 404']
    .forEach((d) => series('osc', 117, '#ff0000', 3, d));
series('osc', 117, '#ffff20', 1, `0 422;1 428;3 416;6 405;7 406;8 420;10 425;17 428;26 428;33 426;35 415;37 402;39 405;41 420;42 427;43 400;44 350;45 296;46 238;47 190;48 160;49 149;50 145;51 149;52 157;53 171;54 212;55 200;56 222;57 207;58 197;59 193;60 212;61 162;62 155;63 156;64 181;65 198;66 215;67 250;68 296;69 350;70 396;71 412;72 402;73 385;74 295;75 313;76 298;77 292;78 300;79 349;80 357;81 330;82 285;83 250;84 210;85 199;86 200;87 236;88 285;89.4 315;90.5 360;91.5 400;92.5 420;94 430;98.5 430;100 420;101 405;102 340;103.2 287;104 310;105 327;106 316;107 307;108 275;109 216;110 222;111 240;112 225;113 200;115 157;116 165;117 146;118 140;120 133;121 134;122 145;123 185;124 250;125 320;126 370;127 395;129 425;132 426;134 405;135 305;136 210;137 160`);
series('osc', 117, '#ff10ff', 1, `0 388;1.5 400;3 410;4 413;6 423;10 425;16 430;32 430;34 425;36 422;38 417;40 413;43 410;44 385;45 335;46 285;47 225;48 188;49 170;50 163;52 162;53 157;54 149;56 145;58 146;60 153;63 154;65 168;67 168;69 190;70 215;71 245;73 281;75 293;76 315;78 340;80 378;81 394;82 380;83 350;84 312;85 280;86 260;87 247;88 238;89.5 245;90.3 248;91 270;92 310;93 340;94 360;96 370;99 390;101 413;102 411;103 405;105 400;107 385;108 365;109 335;110 290;111 255;112 205;113 180;114 170;116 168;118 158;120 151;122 139;124 141;125 160;127 220;128 245;129 270;131 310;132 340;133 360;134 375;135 370;137 343`);
cursors('osc');

let matrix = '<span></span>';
for (let n = 10; n > 0; n--) matrix += `<span>${n}</span>`;
matrix += '<span></span>'.repeat(6);
[['M5', 'gggggbggbb', '7', 'gggxx'], ['M15', 'gggggggggg', '21', 'gggxx'], ['H1', 'bbbggggggg', '42', 'ggxxx'], ['H4', 'oooooxobbb', '89', 'xxxxx'], ['D1', 'rrrrrxrrxx', '144', 'xxxxx']].forEach(([name, row, period, late]) => {
    matrix += `<span class="label">${name}</span>`;
    matrix += row.split('').map((c) => `<i class="${c}"></i>`).join('');
    matrix += `<span class="period">${period}</span>`;
    matrix += late.split('').map((c) => `<i class="${c} late"></i>`).join('');
});
byId('matrix').innerHTML = matrix;

// ---- trend pane ----
separators('trend');
[16.5, 89.5].forEach((y) => hline('trend', y, '#b8b8b8', '3 3'));
series('trend', 6, '#007d00', 1, `0 43;1 52;3 22;4 30;6 32;8 58;9 43;10 53;12 52;15 92;17 94;18 88;19 100;20 88;22 108;24 111;26 128;27 145;28 151;29 148;30 157;32 133;34 153;36 157;37 145;38 154;39 140;42 154;44 128;45 148;48 132;49 121;51 145;52 151;54 151;55 142;56 150;57 139;60 150;61 138;63 168;65 174;66 174;68 190;70 222;72 215;74 190;75 205;76 199;78 204;79 216;82 183;83 184;84 178;86 205;87 219;89 223;90.5 235;92 250;94 268;96 262;97 272;98 262;99 272;100 266;102 260;104 279;106 258;108 248;109 235;111 265;113 255;115 248;116 258;117 243;118 249;119 246;121 262;123 298;124 290;126 292;127 277;129 306;130 298;132 304;133 292;134 306;135 290;136 284;137 283`);
series('trend', 6, '#e06810', 1, `0 220;1 270;2 222;3 205;4 217;6 219;7 227;8 265;9 247;10 255;12 250;13 253;15 295;16 296;17 275;18 271;19 287;20 249;22 260;23 270;24 254;26 275;27 296;28 298;29 290;30 298;31 288;32 232;33 243;34 248;36 245;37 250;38 247;39 252;40 246;41 251;42 270;43 185;44 115;45 142;46 128;49 120;50 125;52 133;53 127;54 139;55 110;56 124;57 100;59 103;60 115;61 27;62 45;63 77;64 100;65 86;67 92;68 100;69 120;70 128;71 120;72 101;73 97;74 45;75 117;76 97;78 107;79 138;80 119;81 83;82 76;83 80;84 71;85 80;86 88;88 110;89.4 102;91 125;92 145;94 160;95 150;96 146;97 154;98 145;99 154;100 133;101 127;102 116;103 122;104 148;105 143;106 130;107 130;108 118;109 100;110 122;111 124;112 110;114 100;115 88;116 104;117 47;118 47;119 22;120 30;121 55;122 86;123 117;124 112;125 115;127 106;129 142;130 137;132 139;133 108;134 115;135 53;137 46`);
series('trend', 6, '#fff', 3, `0 300;20 300;25 303;28 306;35 306;36 302;43 300;45 295;48 280;50 267;54 240;56 216;58 185;59 167;60 160;61 135;63 95;65 65;67 40;69 27;71 22;74 27;75 35;77 41;78 47;80 70;82 79;84 84;86 97;87 115;88 132;89.4 138;91 155;94 200;96 220;99 250;102 263;104 272;107 270;109 265;112 259;116 252;117 238;118 222;119 195;121 165;122 153;123 153;125 159;126 155;128 136;131 117;133 108;134 97;135 80;136 68;137 60`);
series('trend', 6, '#ff0000', 3, `0 217;2 230;3 240;5 248;7 257;8 268;10 282;12 293;16 296;24 300;36 305;44 306;50 302;58 295;62 285;68 275;72 270;77 261;81 250;83 240;85 228;88 215;89.5 210;92 200;95 188;100 180;103 168;108 168;110 163;113 159;117 163;120 158;123 162;125 174;127 184;129 200;131 222;132 227;134 228;135 222;137 214`);
cursors('trend');

// ---- rsi pane ----
separators('rsi');
[17.5, 91.5].forEach((y) => hline('rsi', y, '#707070', '3 3'));
[20.5, 88.5].forEach((y) => hline('rsi', y, '#707070', '18 6'));
series('rsi', 330, '#ff3000', 1, `0 356;1 359;6 361;10 372;13 382;15 398;19 420;23 436;26 445;29 478;32 497;35 515;38 526;42 535;44 532;48 519;52 514;56 512;58 507;62 499;65 504;69 516;71 530;73 535;77 539;80 545;82 538;84 528;87 526;89.4 530;92 540;98 577;104 593;108 590;114 580;117 570;120 560;122 562;125 578;128 590;131 612;134 620;136 612;137 610`, '6 3');
series('rsi', 330, '#ff10ff', 1, `0 653;43.5 653;44 648;45 618;46 530;47 440;48 388;49 363;50 358;51 357;52 362;53 373;54 394;55 403;56 406;57 391;58 378;59 370;60 370;61 348;62 338;64 338;66 350;67 368;68 395;69 450;70 530;71 588;72 603;73 592;74 520;75 488;77 502;78 530;79 580;80 615;81 605;82 557;83 500;84 438;85 400;86 388;87 402;88 440;89.4 498;91 560;92 600;93 630;94 645;96 653;100 653;101 650;103 627;107 632;108 620;109 590;110 562;112 545;113 520;114 480;115 437;116 415;117 370;118 345;119 336;122 336;123 345;124 375;125 440;126 500;128 580;129 610;130 633;132 638;133 636;134 620;135 560;136 450;137 380`);
series('rsi', 330, '#ffff20', 1, `0 628;1 633;4 620;6 613;7 615;8 627;10 633;22 634;24 631;27 635;33 634;35 622;37 613;38 616;40 614;42 634;43 622;44 560;45 500;46 440;47 400;48 373;49 361;51 361;52 373;53 382;54 420;55 412;56 432;57 419;58 408;59 406;60 427;61 374;62 364;63 370;64 394;65 410;66 430;67 462;68 500;69 560;70 605;71 619;72 611;73 590;74 507;75 523;76 508;77 502;78 515;79 550;80 565;81 540;82 493;83 468;84 420;85 408;86 410;87 445;88 492;89.4 525;90.5 570;92 618;94 636;98.6 636;100 628;101 605;102 545;103.2 497;104 522;105 538;107 516;108 480;109 427;111 453;112 430;114 385;115 370;116 376;117 360;119 348;122 348;123 400;124 480;126 570;128 610;130 633;133 634;134 610;135 540;136 430;137 365`);
series('rsi', 330, '#ff1093', 4, '0 640;118.2 640');
series('rsi', 330, '#1088ff', 4, '118.2 640;119 346;123.1 346');
series('rsi', 330, '#ff1093', 4, '123.1 346;124 493;127.2 493;128.1 565;131 565;132 601;136 601');
series('rsi', 330, '#1088ff', 4, '136 601;137 385');
series('rsi', 330, '#ffff20', 1, '0 640;118.2 640;119 346;123.1 346;124 622;127 622;128 637;132 640;136 640;137 365', '3 3');
cursors('rsi');

// ---- strip ----
separators('strip');
const strip = 'R'.repeat(5) + 'rrr' + 'R'.repeat(12) + 'r'.repeat(7) + 'R'.repeat(5) + 'r'.repeat(12) + 'G'.repeat(10) + 'gGgGGGgGGG' + 'gggg' + 'r' + 'RRRRR' + 'G' + 'RRRRRRR' + 'G'.repeat(6) + 'R'.repeat(12) + 'r'.repeat(9) + 'ggg' + 'G'.repeat(11) + 'gr' + 'R'.repeat(10) + 'GGG';
strip.split('').forEach((c, k) => {
    add('strip', 'rect', { x: k * STEP - 2, y: 1, width: 5, height: 11, fill: c.toLowerCase() === 'g' ? '#004000' : '#580000' });
    if (c === 'R' || c === 'G') add('strip', 'rect', { x: k * STEP - 1, y: 5, width: 4, height: 5, fill: c === 'G' ? '#007800' : '#a00000' });
});

// ---- scales below ----
const scale = (id, rows) => rows.forEach(([y, t]) => label(id, t.length > 1 ? 2 : 3, y, t, '#708090', 'axis'));
scale('osc-scale', [[11, '2'], [21, '85'], [98, '15'], [108, '1']]);
scale('trend-scale', [[11, '2'], [21, '85'], [94, '15'], [103, '1']]);
scale('rsi-scale', [[11, '2'], [22, '86'], [24, '85'], [91, '15'], [95, '15'], [106, '1']]);
scale('strip-scale', [[10, '2'], [11, '1']]);

// ---- time axis ----
['5 Jul 2022', '6 Jul 12:00', '7 Jul 20:00', '11 Jul 04:00', '12 Jul 12:00', '13 Jul 20:00', '15 Jul 04:00', '18 Jul 12:00', '19 Jul 20:00', '21 Jul 04:00', '22 Jul 12:00', '25 Jul 20:00', '27 Jul 04:00', '28 Jul 12:00', '29 Jul 20:00', '2 Aug 04:00', '3 Aug 12:00', '4 Aug 20:00'].forEach((t, i) => {
    add('dates', 'path', { class: 'crisp', d: `M${i * 64 + 1.5} 0v3`, stroke: '#708090' });
    label('dates', Math.abs(i * 64 - 1), 12, t, '#708090', 'axis');
});
[[970, '2022.08.03 04:00'], [1042, '2022.08.04 16:00']].forEach(([x, t]) => {
    add('dates', 'rect', { x: x, y: 2, width: 78, height: 12, fill: '#ff00ff' });
    label('dates', x + 2, 11, t, '#000', 'small');
});

for (let i = 0; i < 8; i++) {
    add('traffic', 'rect', { x: i * 3, y: 0, width: 2, height: 10 - i, fill: '#5a7a10' });
    add('traffic', 'rect', { x: i * 3, y: 10 - i, width: 2, height: 3 + i, fill: '#0c3c6c' });
}
```
